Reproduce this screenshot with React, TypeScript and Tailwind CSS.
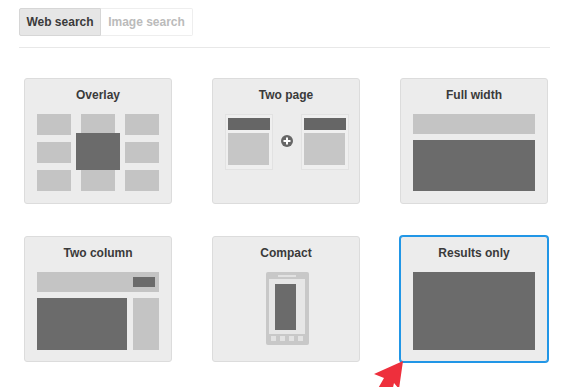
import React from 'react';

const font = { fontFamily: '"Liberation Sans", Arial, sans-serif' };

function Card({ title, selected, children }: { title: string; selected?: boolean; children: React.ReactNode }) {
  return (
    <div
      className={`h-[126px] w-[148px] rounded-[3px] bg-[#ececec] px-[12px] ${
        selected ? 'border border-[#2196e6] ring-1 ring-[#2196e6]' : 'border border-[#dcdcdc]'
      }`}
    >
      <div className="pt-[8px] text-center text-[12px] font-bold leading-[16px] text-[#3a3a3a]">{title}</div>
      <div className="mt-[11px]">{children}</div>
    </div>
  );
}

function Overlay() {
  return (
    <div className="relative w-[122px]">
      <div className="grid grid-cols-[34px_34px_34px] gap-x-[10px] gap-y-[7px]">
        {Array.from({ length: 9 }).map((_, i) => (
          <div key={i} className="h-[21px] bg-[#c4c4c4]" />
        ))}
      </div>
      <div className="absolute left-[39px] top-[19px] h-[37px] w-[44px] bg-[#6b6b6b]" />
    </div>
  );
}

function PageFrame() {
  return (
    <div className="h-[56px] w-[48px] border border-[#e2e2e2] bg-[#efefef] px-[2px] pt-[3px]">
      <div className="h-[12px] bg-[#666]" />
      <div className="mt-[3px] h-[32px] w-[41px] bg-[#c6c6c6]" />
    </div>
  );
}

function TwoPage() {
  return (
    <div className="flex w-[124px] items-start justify-between">
      <PageFrame />
      <svg width="12" height="12" viewBox="0 0 12 12" className="mt-[21px]">
        <circle cx="6" cy="6" r="6" fill="#666" />
        <rect x="5" y="2.5" width="2" height="7" fill="#fff" />
        <rect x="2.5" y="5" width="7" height="2" fill="#fff" />
      </svg>
      <PageFrame />
    </div>
  );
}

function FullWidth() {
  return (
    <div className="flex w-[122px] flex-col gap-[6px]">
      <div className="h-[20px] bg-[#c4c4c4]" />
      <div className="h-[51px] bg-[#6b6b6b]" />
    </div>
  );
}

function TwoColumn() {
  return (
    <div className="flex w-[122px] flex-col gap-[6px]">
      <div className="flex h-[20px] items-center justify-end bg-[#c4c4c4] pr-[4px]">
        <div className="h-[10px] w-[22px] bg-[#6b6b6b]" />
      </div>
      <div className="flex gap-[6px]">
        <div className="h-[52px] w-[90px] bg-[#6b6b6b]" />
        <div className="h-[52px] w-[26px] bg-[#c4c4c4]" />
      </div>
    </div>
  );
}

function Compact() {
  return (
    <div className="flex justify-center">
      <div className="ml-[2px] flex h-[73px] w-[43px] flex-col items-center rounded-[2px] bg-[#c8c8c8] pt-[3px]">
        <div className="h-[2px] w-[18px] bg-[#e2e2e2]" />
        <div className="mt-[2px] flex h-[55px] w-[36px] items-center justify-center bg-[#e6e6e6] pr-[3px]">
          <div className="h-[46px] w-[21px] bg-[#6b6b6b]" />
        </div>
        <div className="mt-[2px] flex gap-[4px]">
          {Array.from({ length: 4 }).map((_, i) => (
            <div key={i} className="h-[5px] w-[5px] bg-[#e2e2e2]" />
          ))}
        </div>
      </div>
    </div>
  );
}

function ResultsOnly() {
  return <div className="h-[78px] w-[122px] bg-[#6b6b6b]" />;
}

export default function App() {
  return (
    <div className="relative h-[387px] w-[571px] overflow-hidden bg-white pl-[19px] pt-[8px]" style={font}>
      <div className="flex">
        <button className="h-[28px] w-[82px] rounded-l-[2px] border border-[#d6d6d6] bg-[#e6e6e6] text-[12px] font-bold text-[#3a3a3a]">
          Web search
        </button>
        <button className="h-[28px] w-[92px] rounded-r-[2px] border border-l-0 border-[#eeeeee] bg-white text-[12px] font-bold text-[#bbb]">
          Image search
        </button>
      </div>
      <div className="mt-[11px] h-px w-[531px] bg-[#e8e8e8]" />

      <div className="ml-[5px] mt-[30px] grid grid-cols-[148px_148px_148px] gap-x-[40px] gap-y-[32px]">
        <Card title="Overlay"><Overlay /></Card>
        <Card title="Two page"><TwoPage /></Card>
        <Card title="Full width"><FullWidth /></Card>
        <Card title="Two column"><TwoColumn /></Card>
        <Card title="Compact"><Compact /></Card>
        <Card title="Results only" selected><ResultsOnly /></Card>
      </div>

      <svg className="absolute left-0 top-0" width="571" height="387" viewBox="0 0 571 387">
        <polygon
          points="403,361 374,374 384,378 376,392 392,392 394,383 399,389"
          fill="#ee2f3c"
        />
      </svg>
    </div>
  );
}
